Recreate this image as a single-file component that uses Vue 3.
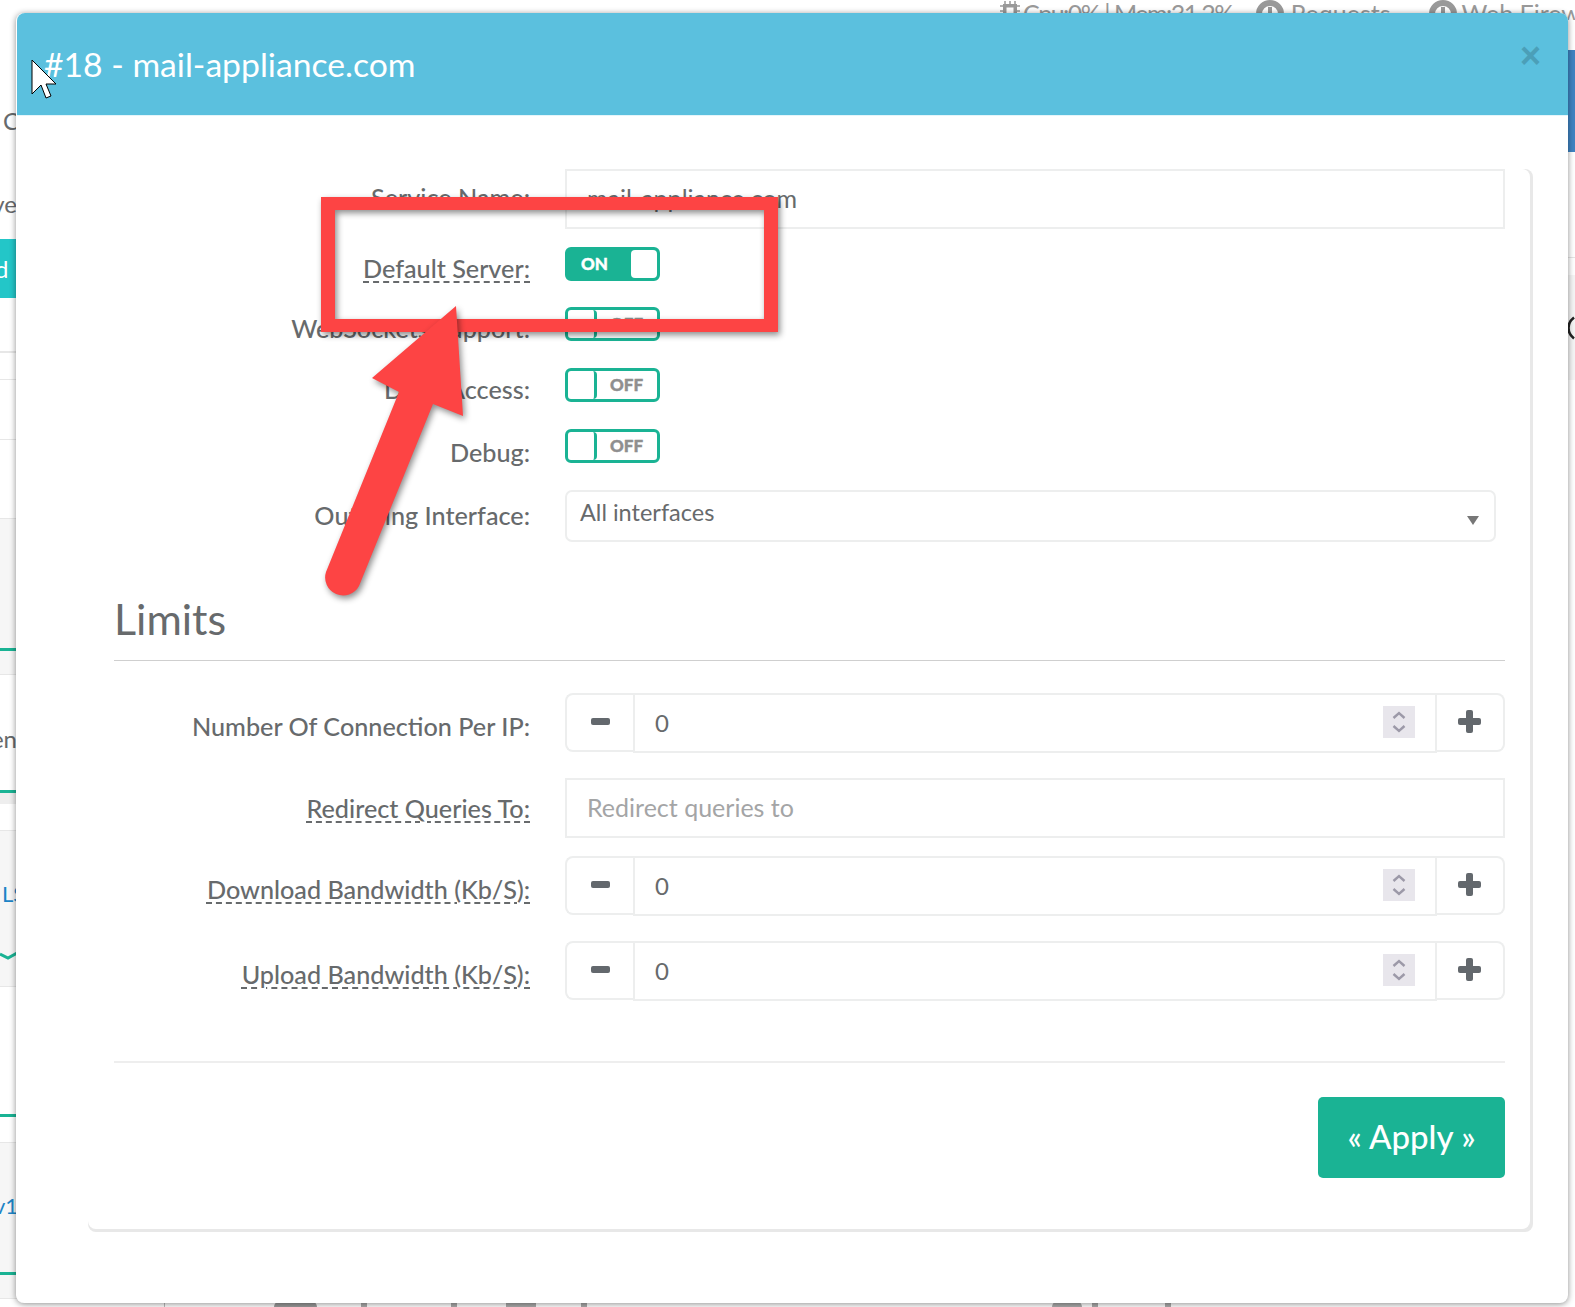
<script setup>
const leftRows = [
  { h: 86 },
  { h: 28, text: 'Co', cls: 'txt start' },
  { h: 55 },
  { h: 29, text: 've', cls: 'txt end' },
  { h: 21 },
  { h: 59, text: 'd -', cls: 'teal' },
  { h: 53 },
  { h: 2, cls: 'line' },
  { h: 26 },
  { h: 1, cls: 'line' },
  { h: 59 },
  { h: 1, cls: 'line' },
  { h: 78 },
  { h: 1, cls: 'line' },
  { h: 129, cls: 'soft' },
  { h: 3, cls: 'green' },
  { h: 23, cls: 'soft' },
  { h: 1, cls: 'line' },
  { h: 49 },
  { h: 28, text: 'en', cls: 'txt end' },
  { h: 38 },
  { h: 3, cls: 'green' },
  { h: 11, cls: 'softer' },
  { h: 26 },
  { h: 1, cls: 'line' },
  { h: 48, cls: 'soft' },
  { h: 28, text: 'LS', cls: 'soft blue' },
  { h: 44, cls: 'soft' },
  { h: 10, cls: 'soft chev' },
  { h: 25, cls: 'soft' },
  { h: 1, cls: 'line' },
  { h: 127 },
  { h: 3, cls: 'green' },
  { h: 25 },
  { h: 1, cls: 'line' },
  { h: 48, cls: 'soft' },
  { h: 28, text: 'v1', cls: 'soft blue end' },
  { h: 53, cls: 'soft' },
  { h: 3, cls: 'green' },
  { h: 23, cls: 'soft' },
  { h: 1, cls: 'line' }
]
const toggles = [
  { id: 'ws', label: 'WebSockets Support:', gap: 'g26', lift: 'p6' },
  { id: 'da', label: 'Deny Access:', gap: 'g27', lift: 'p6' },
  { id: 'db', label: 'Debug:', gap: 'g27', lift: 'p8' }
]
const spins = {
  number: { label: 'Number Of Connection Per IP:', gap: 'g32', lift: 'p6' },
  download: { label: 'Download Bandwidth (Kb/S):', gap: 'g18', lift: 'p6' },
  upload: { label: 'Upload Bandwidth (Kb/S):', gap: 'g25', lift: 'p6' }
}
</script>

<template>
  <div class="page">
    <div class="topbar">
      <svg class="chip" viewBox="0 0 20 20" width="20" height="20">
        <rect x="3" y="3" width="14" height="14" fill="#999" />
        <path d="M5 0v20M10 0v20M15 0v20M0 5h20M0 10h20M0 15h20" stroke="#999" stroke-width="1.5" />
        <rect x="6.5" y="6.5" width="7" height="7" fill="#fff" />
      </svg>
      <span class="top-cpu">Cpu:0% | Mem:31.2%</span>
      <span class="clock"></span>
      <span class="top-req">Requests</span>
      <span class="clock second"></span>
      <span class="top-fw">Web Firewall</span>
    </div>

    <div class="left-strip">
      <div v-for="(r, i) in leftRows" :key="i" class="lrow" :class="r.cls" :style="{ height: r.h + 'px' }">
        <span v-if="r.text">{{ r.text }}</span>
        <svg v-if="r.cls === 'soft chev'" viewBox="0 0 17 10" width="17" height="10">
          <path d="M0 3 L8 7 L17 2" fill="none" stroke="#1ab394" stroke-width="3" />
        </svg>
      </div>
    </div>

    <div class="right-strip">
      <div class="rs-blue"></div>
      <div class="rs-line"></div>
      <div class="rs-soft">
        <svg viewBox="0 0 7 24" width="7" height="24">
          <path d="M6 1.5 C1.5 5 0.5 9 0.5 12 C0.5 15 1.5 19 6 22.5" fill="none" stroke="#222" stroke-width="2.6" />
        </svg>
      </div>
    </div>

    <div class="bottombar">
      <span class="b-edge"></span>
      <span class="b-block"></span>
      <span class="b-dot d1"></span>
      <span class="b-dot d2"></span>
      <span class="b-wide"></span>
      <span class="b-dot d3"></span>
      <span class="b-circle"></span>
      <span class="b-dot d4"></span>
      <span class="b-dot d5"></span>
    </div>

    <section class="modal">
      <header class="modal-head">
        <h4 class="modal-title">#18 - mail-appliance.com</h4>
        <span class="close">×</span>
      </header>

      <div class="panel">
        <div class="row h60">
          <label class="lab raise3"><span>Service Name:</span></label>
          <div class="field">mail-appliance.com</div>
        </div>

        <div class="row g18 h34">
          <label class="lab p6"><span class="dash">Default Server:</span></label>
          <div class="toggle on"><b>ON</b><i></i></div>
        </div>

        <div v-for="t in toggles" :key="t.id" class="row h34" :class="t.gap">
          <label class="lab" :class="t.lift"><span>{{ t.label }}</span></label>
          <div class="toggle"><i></i><b>OFF</b></div>
        </div>

        <div class="row g27 h52">
          <label class="lab raise1"><span>Outgoing Interface:</span></label>
          <div class="select">
            <span>All interfaces</span>
            <em class="caret"></em>
          </div>
        </div>

        <h2 class="limits">Limits</h2>

        <div class="row h60" :class="spins.number.gap">
          <label class="lab" :class="spins.number.lift"><span>{{ spins.number.label }}</span></label>
          <div class="spin">
            <div class="step left"><em class="minus"></em></div>
            <div class="value">
              <span>0</span>
              <div class="arrows">
                <svg viewBox="0 0 32 32" width="32" height="32">
                  <path d="M10.5 12 L16 7 L21.5 12 M10.5 20 L16 25 L21.5 20" fill="none" stroke="#9c99a8" stroke-width="2.4" />
                </svg>
              </div>
            </div>
            <div class="step right"><em class="plus"></em></div>
          </div>
        </div>

        <div class="row g25 h60">
          <label class="lab p0"><span class="dash">Redirect Queries To:</span></label>
          <div class="field placeholder">Redirect queries to</div>
        </div>

        <div v-for="s in [spins.download, spins.upload]" :key="s.label" class="row h60" :class="s.gap">
          <label class="lab" :class="s.lift"><span class="dash">{{ s.label }}</span></label>
          <div class="spin">
            <div class="step left"><em class="minus"></em></div>
            <div class="value">
              <span>0</span>
              <div class="arrows">
                <svg viewBox="0 0 32 32" width="32" height="32">
                  <path d="M10.5 12 L16 7 L21.5 12 M10.5 20 L16 25 L21.5 20" fill="none" stroke="#9c99a8" stroke-width="2.4" />
                </svg>
              </div>
            </div>
            <div class="step right"><em class="plus"></em></div>
          </div>
        </div>

        <div class="divider"></div>
        <button class="apply" type="button">« Apply »</button>
      </div>
    </section>

    <svg class="annotation" viewBox="0 0 1575 1307" width="1575" height="1307">
      <g class="mark">
        <path fill-rule="evenodd" d="M321 197 H778 V332 H321 Z M335 210 V319 H764 V210 Z" fill="#fd4444" />
      </g>
      <g class="mark">
        <path d="M456 306 L372 378 L399 392 L326 572 A18 18 0 0 0 359 586 L433 404 L463 416 Z" fill="#fd4444" />
      </g>
      <path d="M32 60 L32 94 L41 85 L46 98 L51 96 L46 84 L56 84 Z" fill="#fff" stroke="#000" stroke-width="1" />
    </svg>
  </div>
</template>

<style>
html, body { margin: 0; background: #fff; }
</style>

<style scoped>
.page {
  position: relative;
  width: 1575px;
  height: 1307px;
  overflow: hidden;
  background: #fff;
  font-family: Lato, "Open Sans", sans-serif;
  color: #676a6c;
  display: grid;
  grid-template-columns: 60px 1fr 7px;
  grid-template-rows: 20px 1fr 10px;
}
.topbar {
  grid-column: 1 / 4;
  grid-row: 1;
  display: flex;
  align-items: flex-start;
  padding-left: 1000px;
  overflow: hidden;
  white-space: nowrap;
  font-size: 25px;
  line-height: 26px;
  color: #999;
}
.chip { margin-top: 1px; flex: none; }
.top-cpu { margin-left: 3px; width: 212px; letter-spacing: -1.5px; }
.clock {
  position: relative;
  flex: none;
  width: 28px;
  height: 28px;
  box-sizing: border-box;
  border: 6px solid #999;
  border-radius: 50%;
  margin: 0 7px 0 23px;
}
.clock::after {
  content: "";
  position: absolute;
  left: 6px;
  top: 1px;
  width: 4px;
  height: 12px;
  background: #999;
}
.clock.second { margin: 0 5px 0 38px; }
.top-req { width: 100px; }

.left-strip {
  grid-column: 1;
  grid-row: 2 / 4;
  width: 30px;
  font-size: 24px;
  color: #676a6c;
}
.lrow {
  display: flex;
  align-items: center;
  box-sizing: border-box;
  overflow: hidden;
  width: 17px;
  white-space: nowrap;
}
.lrow.txt.start { padding-left: 3px; }
.lrow.end { justify-content: flex-end; }
.lrow.teal {
  background: #23c6c8;
  color: #fff;
  justify-content: flex-start;
  word-spacing: 4px;
}
.lrow.teal span { margin-left: -5px; }
.lrow.line { background: #e7e7e7; }
.lrow.soft { background: #f6f6f6; }
.lrow.softer { background: #eeeeee; }
.lrow.green { background: #1ab394; }
.lrow.blue { color: #1c84c6; padding-left: 2px; font-size: 22px; }
.lrow.blue.end { padding-left: 0; }
.lrow.blue.end span { margin-right: -1px; }

.right-strip {
  grid-column: 3;
  grid-row: 2;
  padding-top: 30px;
}
.rs-blue { height: 102px; background: #3f83c2; }
.rs-line { height: 1px; margin-top: 105px; background: #e5e5e5; }
.rs-soft {
  height: 105px;
  margin-top: 17px;
  background: #f5f5f5;
  display: flex;
  align-items: center;
}

.bottombar {
  grid-column: 2 / 4;
  grid-row: 3;
  display: flex;
  align-items: flex-end;
  height: 10px;
  padding-left: 104px;
}
.b-edge { width: 1px; height: 10px; background: #bbb; }
.b-block { width: 43px; height: 6px; margin-left: 109px; background: #999; border-radius: 8px 8px 0 0; }
.b-dot { width: 6px; height: 4px; background: #aaa; }
.b-dot.d1 { margin-left: 44px; }
.b-dot.d2 { margin-left: 84px; }
.b-wide { width: 30px; height: 4px; margin-left: 49px; background: #aaa; }
.b-dot.d3 { margin-left: 45px; }
.b-circle { width: 30px; height: 6px; margin-left: 465px; background: #aaa; border-radius: 15px 15px 0 0; }
.b-dot.d4 { margin-left: 10px; }
.b-dot.d5 { margin-left: 67px; }

.modal {
  position: absolute;
  left: 16px;
  top: 13px;
  width: 1552px;
  height: 1290px;
  box-sizing: border-box;
  background: #fff;
  border-left: 1px solid #fff;
  border-radius: 8px;
  box-shadow: 0 1px 6px rgba(0, 0, 0, 0.45);
}
.modal-head {
  display: flex;
  justify-content: space-between;
  height: 102px;
  background: #5bc0de;
  border-bottom: 1px solid #e4f5fa;
  border-radius: 8px 8px 0 0;
  padding-left: 27px;
  padding-right: 27px;
}
.modal-title {
  margin: 0;
  font-size: 33.7px;
  font-weight: 400;
  line-height: 103px;
  color: #fff;
}
.close {
  font-family: "Liberation Sans", sans-serif;
  font-size: 36px;
  font-weight: 700;
  line-height: 86px;
  color: #4b9fb8;
}

.panel {
  display: flex;
  flex-direction: column;
  box-sizing: border-box;
  width: 1442px;
  height: 1060px;
  margin: 53px 0 0 71px;
  padding: 0 25px 0 26px;
  background: #fff;
  border-radius: 8px;
  box-shadow: 3px 3px 0 #e8e8e8, 0 3px 0 #e8e8e8, 3px 0 0 #e8e8e8;
}
.row {
  display: grid;
  grid-template-columns: 416px 940px;
  column-gap: 35px;
  flex: none;
}
.g18 { margin-top: 18px; }
.g25 { margin-top: 25px; }
.g26 { margin-top: 26px; }
.g27 { margin-top: 27px; }
.g32 { margin-top: 32px; }
.h34 { height: 34px; }
.h52 { height: 52px; }
.h60 { height: 60px; }

.lab {
  align-self: center;
  text-align: right;
  font-size: 25.2px;
  font-weight: 500;
  line-height: 30px;
  white-space: nowrap;
}
.p0 { padding-top: 0; }
.p6 { padding-top: 6px; }
.p8 { padding-top: 8px; }
.raise1 { padding-bottom: 2px; }
.raise3 { padding-bottom: 4px; }
.dash {
  text-decoration: underline dashed #676a6c 2px;
  text-underline-offset: 3px;
}

.field {
  box-sizing: border-box;
  height: 100%;
  display: flex;
  align-items: center;
  padding: 0 0 2px 20px;
  border: 2px solid #edeeee;
  font-size: 25px;
}
.field.placeholder { color: #a4a5a6; }

.toggle {
  box-sizing: border-box;
  width: 95px;
  height: 34px;
  display: flex;
  align-items: center;
  border: 3px solid #1ab394;
  border-radius: 6px;
  background: #fff;
}
.toggle i {
  flex: none;
  width: 26px;
  height: 100%;
  border-right: 3px solid #1ab394;
  border-radius: 4px;
}
.toggle b {
  margin: 0 0 2px 13px;
  font-size: 17px;
  line-height: 1;
  font-weight: 900;
  color: #8f8f8f;
  -webkit-text-stroke: 0.4px currentColor;
}
.toggle.on {
  justify-content: space-between;
  background: #1ab394;
}
.toggle.on b { color: #fff; margin-left: 13px; }
.toggle.on i {
  border-right: 0;
  background: #fff;
}

.select {
  box-sizing: border-box;
  width: 931px;
  height: 52px;
  display: flex;
  align-items: center;
  justify-content: space-between;
  padding: 0 15px 0 13px;
  border: 2px solid #edeeee;
  border-radius: 7px;
  font-size: 23.5px;
  line-height: 40px;
}
.select span { margin-top: -9px; }
.caret {
  margin-top: 8px;
  width: 0;
  height: 0;
  border-left: 6px solid transparent;
  border-right: 6px solid transparent;
  border-top: 9px solid #777;
}

.limits {
  flex: none;
  margin: 0;
  height: 112px;
  border-bottom: 1px solid #cfcfcf;
  display: flex;
  align-items: flex-end;
  padding-bottom: 6px;
  font-size: 43px;
  font-weight: 400;
  line-height: 70px;
}

.spin { display: flex; height: 100%; }
.step {
  flex: none;
  box-sizing: border-box;
  display: flex;
  align-items: center;
  justify-content: center;
  border: 2px solid #edeeee;
  background: #fff;
}
.step.left {
  width: 68px;
  height: calc(100% - 1px);
  border-right: 0;
  border-radius: 8px 0 0 8px;
}
.step.right {
  width: 68px;
  height: calc(100% - 1px);
  border-left: 0;
  border-radius: 0 8px 8px 0;
  padding-right: 2px;
}
.value {
  flex: 1;
  display: flex;
  align-items: center;
  justify-content: space-between;
  box-sizing: border-box;
  border: 2px solid #edeeee;
  padding: 0 20px 2px 20px;
  font-size: 24px;
}
.arrows {
  width: 32px;
  height: 32px;
  background: #e8e6ec;
}
.arrows svg { display: block; }
.minus {
  display: block;
  width: 19px;
  height: 7px;
  margin-bottom: 2px;
  border-radius: 2px;
  background: #63686d;
}
.plus {
  position: relative;
  display: block;
  width: 23px;
  height: 7px;
  margin-bottom: 2px;
  border-radius: 2px;
  background: #63686d;
}
.plus::after {
  content: "";
  position: absolute;
  left: 8px;
  top: -8px;
  width: 7px;
  height: 23px;
  border-radius: 2px;
  background: #63686d;
}

.divider {
  flex: none;
  height: 2px;
  margin-top: 60px;
  background: #eeeeee;
}
.apply {
  flex: none;
  align-self: flex-end;
  width: 187px;
  height: 81px;
  margin-top: 34px;
  padding: 0 0 4px;
  border: 0;
  border-radius: 5px;
  background: #1ab394;
  color: #fff;
  font-family: Lato, sans-serif;
  font-size: 33px;
  font-weight: 500;
}

.annotation {
  position: absolute;
  left: 0;
  top: 0;
  pointer-events: none;
}
.mark { filter: drop-shadow(2px 3px 3px rgba(0, 0, 0, 0.45)); }
</style>
